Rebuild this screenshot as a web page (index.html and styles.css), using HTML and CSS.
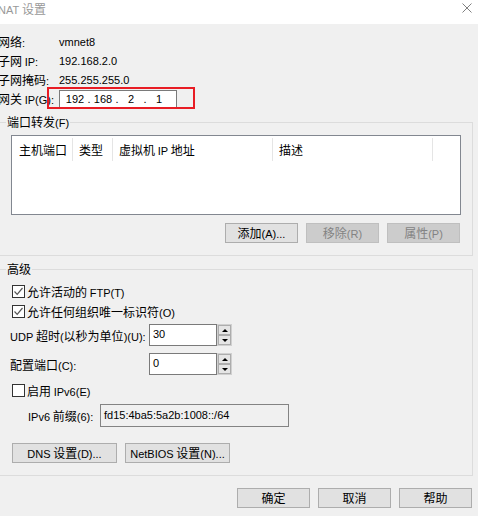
FILE: index.html
```html
<!DOCTYPE html>
<html lang="zh-CN">
<head>
<meta charset="utf-8">
<title>NAT 设置</title>
<link rel="stylesheet" href="styles.css">
</head>
<body>
<div class="titlebar">
  <span class="title"><span class="en">NAT</span> 设置</span>
  <svg class="close" viewBox="0 0 10 10" width="10" height="10"><path d="M0.5 0.5 L9.5 9.5 M9.5 0.5 L0.5 9.5" stroke="#808080" stroke-width="1" fill="none"/></svg>
</div>
<div class="info">
  <div class="row"><span class="lbl">网络<span class="en">:</span></span><span class="en">vmnet8</span></div>
  <div class="row"><span class="lbl">子网 <span class="en">IP:</span></span><span class="en">192.168.2.0</span></div>
  <div class="row"><span class="lbl">子网掩码<span class="en">:</span></span><span class="en">255.255.255.0</span></div>
  <div class="row gw">
    <span class="lbl">网关 <span class="en">IP(G):</span></span>
    <div class="ipbox en"><span class="seg">192</span><span class="dot">.</span><span class="seg">168</span><span class="dot">.</span><span class="seg">2</span><span class="dot">.</span><span class="seg">1</span></div>
    <div class="redmark"></div>
  </div>
</div>

<fieldset class="group pf">
  <legend>端口转发<span class="en">(F)</span></legend>
  <div class="list">
    <div class="list-head">
      <div class="col c1">主机端口</div>
      <div class="col c2">类型</div>
      <div class="col c3">虚拟机 <span class="en">IP</span> 地址</div>
      <div class="col c4">描述</div>
    </div>
  </div>
  <div class="btnrow">
    <button class="btn">添加<span class="en">(A)...</span></button>
    <button class="btn dis">移除<span class="en">(R)</span></button>
    <button class="btn dis">属性<span class="en">(P)</span></button>
  </div>
</fieldset>

<fieldset class="group adv">
  <legend>高级</legend>
  <div class="cb first"><span class="box"><svg viewBox="0 0 11 11" width="11" height="11"><path d="M1.5 5.5 L4.2 8.3 L9.5 2" stroke="#555" stroke-width="1.2" fill="none"/></svg></span><span>允许活动的 <span class="en">FTP(T)</span></span></div>
  <div class="cb"><span class="box"><svg viewBox="0 0 11 11" width="11" height="11"><path d="M1.5 5.5 L4.2 8.3 L9.5 2" stroke="#555" stroke-width="1.2" fill="none"/></svg></span><span>允许任何组织唯一标识符<span class="en">(O)</span></span></div>
  <div class="srow udp">
    <span class="slbl"><span class="en">UDP</span> 超时<span class="en">(</span>以秒为单位<span class="en">)(U):</span></span>
    <div class="sinput en">30</div>
    <div class="spin"><span class="up"><i class="tri-up"></i></span><span class="dn"><i class="tri-dn"></i></span></div>
  </div>
  <div class="srow port">
    <span class="slbl">配置端口<span class="en">(C):</span></span>
    <div class="sinput en">0</div>
    <div class="spin"><span class="up"><i class="tri-up"></i></span><span class="dn"><i class="tri-dn"></i></span></div>
  </div>
  <div class="cb v6"><span class="box"></span><span>启用 <span class="en">IPv6(E)</span></span></div>
  <div class="prow">
    <span class="plbl"><span class="en">IPv6</span> 前缀<span class="en">(6):</span></span>
    <div class="pinput en">fd15:4ba5:5a2b:1008::/64</div>
  </div>
  <div class="btnrow2">
    <button class="btn wide"><span class="en">DNS</span> 设置<span class="en">(D)...</span></button>
    <button class="btn wide"><span class="en">NetBIOS</span> 设置<span class="en">(N)...</span></button>
  </div>
</fieldset>

<div class="footer">
  <button class="btn">确定</button>
  <button class="btn">取消</button>
  <button class="btn">帮助</button>
</div>
</body>
</html>
```

FILE: styles.css
```css
* { box-sizing: border-box; }
html, body { margin: 0; padding: 0; }
body {
  width: 478px;
  height: 516px;
  overflow: hidden;
  background: #f0f0f0;
  font-family: "Noto Sans CJK SC", sans-serif;
  font-size: 12px;
  color: #000;
}
.en { font-family: "Liberation Sans", "Noto Sans CJK SC", sans-serif; font-size: 11px; }
.titlebar {
  height: 24px;
  background: #fff;
  display: flex;
  justify-content: space-between;
  align-items: flex-start;
}
.title { margin-left: -2px; line-height: 18px; color: #999; }
.close { width: 10px; height: 10px; margin: 3px 6px 0 0; }

.info { margin-top: 8px; margin-left: -2px; }
.row { display: flex; height: 19px; align-items: center; white-space: nowrap; }
.lbl { width: 61px; flex: none; }
.row.gw { height: 20px; position: relative; align-items: flex-start; }
.row.gw .lbl { line-height: 20px; }
.ipbox {
  margin-top: 1px;
  width: 118px;
  height: 18px;
  background: #fff;
  border: 1px solid #7a7a7a;
  display: flex;
  padding-left: 4px;
  line-height: 16px;
}
.seg { width: 22px; text-align: center; }
.dot { width: 6px; text-align: center; }
.redmark {
  position: absolute;
  left: 49px;
  top: -2px;
  width: 148px;
  height: 22px;
  border: 2px solid #e81c24;
}

.group {
  margin: 5px 0 0 -2px;
  width: 475px;
  min-width: 0;
  border: 1px solid #dcdcdc;
  padding: 0 11px 12px 12px;
}
.group legend { padding: 0 1px; margin-left: -5px; line-height: 16px; }

.list {
  margin-top: 4px;
  height: 80px;
  border: 1px solid #828790;
  background: #fff;
}
.list-head { display: flex; margin-top: 2px; height: 23px; }
.col {
  border-right: 1px solid #e5e5e5;
  padding-left: 6px;
  line-height: 23px;
  white-space: nowrap;
}
.c1 { width: 61px; padding-left: 7px; }
.c2 { width: 40px; }
.c3 { width: 160px; }
.c4 { width: 160px; }

.btnrow { display: flex; justify-content: flex-end; gap: 8px; margin: 8px 1px 0 0; }
.btn {
  width: 73px;
  height: 20px;
  padding: 0;
  border: 1px solid #adadad;
  background: #e1e1e1;
  font: inherit;
  color: #000;
  line-height: 18px;
  white-space: nowrap;
}
.btn .en { font-size: 11px; }
.btn.dis { background: #cccccc; border-color: #bfbfbf; color: #838383; }
.btn.wide { width: 105px; }

.cb { display: flex; align-items: center; height: 20px; white-space: nowrap; }
.cb.first { margin-top: 4px; }
.cb.v6 { margin-top: 5px; }
.box {
  width: 13px;
  height: 13px;
  flex: none;
  border: 1px solid #333;
  background: #fff;
  margin: 0 2px 0 1px;
  display: flex;
}

.srow { display: flex; align-items: center; height: 22px; }
.srow.udp { margin-top: 3px; }
.srow.port { margin-top: 7px; }
.slbl { width: 139px; margin-left: -1px; white-space: nowrap; }
.sinput {
  width: 68px;
  height: 22px;
  border: 1px solid #7a7a7a;
  background: #fff;
  padding-left: 3px;
  line-height: 18px;
}
.spin {
  width: 15px;
  height: 22px;
  border: 1px solid #d0d0d0;
  display: flex;
  flex-direction: column;
  padding: 0;
}
.spin span {
  flex: 1;
  border: 1px solid #adadad;
  background: #e5e5e5;
  display: flex;
  align-items: center;
  justify-content: center;
}
.tri-up, .tri-dn { width: 0; height: 0; border-left: 3px solid transparent; border-right: 3px solid transparent; }
.tri-up { border-bottom: 3px solid #000; }
.tri-dn { border-top: 3px solid #000; }

.prow { display: flex; align-items: center; height: 23px; margin-top: 4px; }
.plbl { width: 89px; padding-left: 17px; white-space: nowrap; }
.pinput {
  width: 189px;
  height: 23px;
  border: 1px solid #838383;
  background: #f0f0f0;
  padding-left: 3px;
  line-height: 20px;
  white-space: nowrap;
}

.btnrow2 { display: flex; gap: 8px; margin: 16px 0 0 1px; }

.footer { display: flex; justify-content: flex-end; gap: 8px; margin-top: 12px; padding-right: 6px; }
```
